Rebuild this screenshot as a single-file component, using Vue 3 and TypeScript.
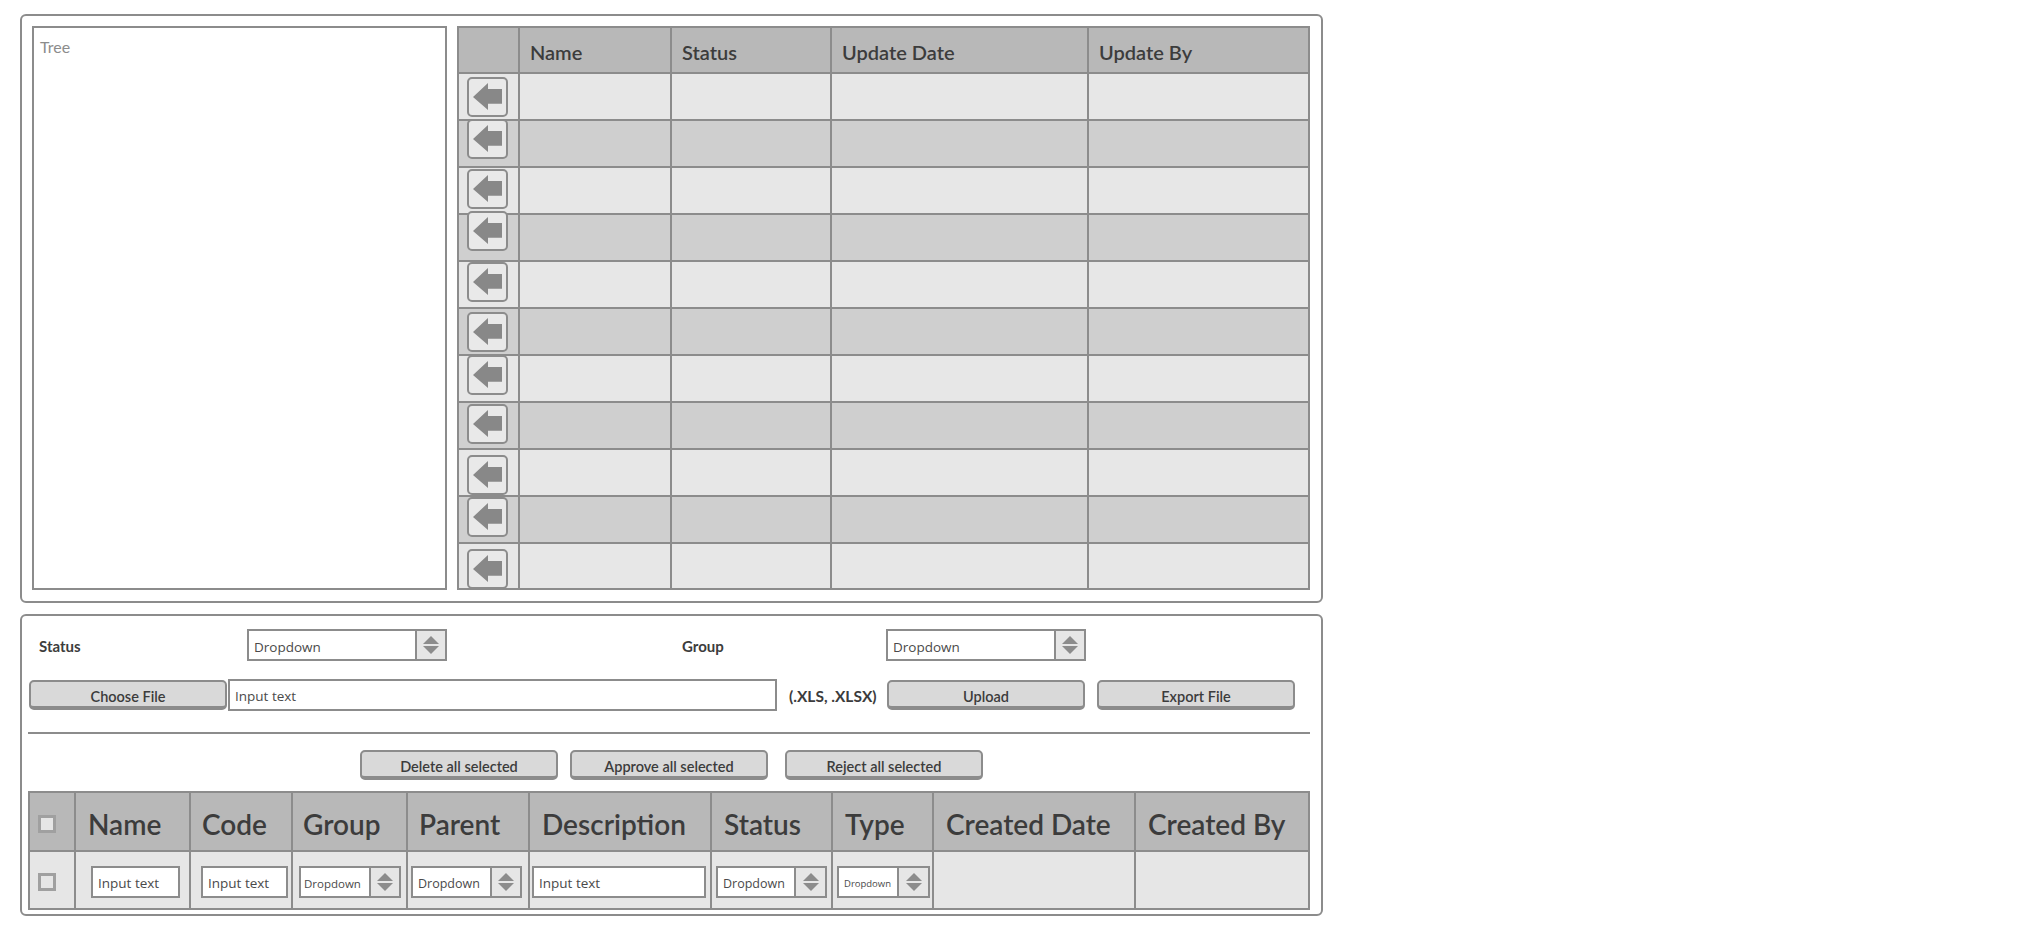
<script setup lang="ts">
type Cell = {
  kind: 'check' | 'input' | 'dropdown' | 'empty'
  left?: number
  width?: number
  font?: number
  pad?: number
  arrowWidth?: number
}

const treeColumns = ['', 'Name', 'Status', 'Update Date', 'Update By']

// the arrow buttons do not sit evenly in their rows
const rowOffsets = [3, -2, 1, -4, 0, 3, -1, 1, 5, 0, 5]

const listColumns = [
  '',
  'Name',
  'Code',
  'Group',
  'Parent',
  'Description',
  'Status',
  'Type',
  'Created Date',
  'Created By',
]

const listCells: Cell[] = [
  { kind: 'check' },
  { kind: 'input', left: 15, width: 89 },
  { kind: 'input', left: 10, width: 87 },
  { kind: 'dropdown', left: 6, width: 102, font: 11.5, pad: 3, arrowWidth: 30 },
  { kind: 'dropdown', left: 3, width: 111, font: 12.5, pad: 5, arrowWidth: 30 },
  { kind: 'input', left: 2, width: 174 },
  { kind: 'dropdown', left: 4, width: 111, font: 12.5, pad: 5, arrowWidth: 31 },
  { kind: 'dropdown', left: 4, width: 93, font: 9.5, pad: 5, arrowWidth: 31 },
  { kind: 'empty' },
  { kind: 'empty' },
]
</script>

<template>
  <div class="page">
    <section class="panel top-panel">
      <div class="tree">Tree</div>
      <div class="tree-table">
        <div v-for="(col, i) in treeColumns" :key="i" class="head-cell">{{ col }}</div>
        <template v-for="(offset, r) in rowOffsets" :key="r">
          <div class="row-cell" :class="{ alt: r % 2 === 1 }">
            <button class="arrow-btn" :style="{ marginTop: offset + 'px' }">
              <svg width="37" height="36" viewBox="0 0 37 36">
                <path d="M4 18 L19 4 L19 10 L33 10 L33 24.7 L19 24.7 L19 31 Z" fill="#888" />
              </svg>
            </button>
          </div>
          <div v-for="c in 4" :key="c" class="row-cell" :class="{ alt: r % 2 === 1 }"></div>
        </template>
      </div>
    </section>

    <section class="panel bottom-panel">
      <div class="filters">
        <span class="label status-label">Status</span>
        <div class="dropdown filter-drop">
          <span class="drop-text">Dropdown</span>
          <span class="drop-arrows"><i class="up"></i><i class="down"></i></span>
        </div>
        <span class="label group-label">Group</span>
        <div class="dropdown filter-drop">
          <span class="drop-text">Dropdown</span>
          <span class="drop-arrows"><i class="up"></i><i class="down"></i></span>
        </div>
      </div>

      <div class="file-row">
        <button class="btn choose">Choose File</button>
        <div class="input file-input">Input text</div>
        <span class="label ext">(.XLS, .XLSX)</span>
        <button class="btn upload">Upload</button>
        <button class="btn export">Export File</button>
      </div>

      <div class="divider"></div>

      <div class="bulk-row">
        <button class="btn">Delete all selected</button>
        <button class="btn">Approve all selected</button>
        <button class="btn reject">Reject all selected</button>
      </div>

      <div class="list-table">
        <div v-for="(col, i) in listColumns" :key="i" class="list-head">
          <span v-if="i === 0" class="check"></span>
          {{ col }}
        </div>
        <div v-for="(cell, i) in listCells" :key="'c' + i" class="list-cell">
          <span v-if="cell.kind === 'check'" class="check"></span>
          <div
            v-else-if="cell.kind === 'input'"
            class="input cell-input"
            :style="{ marginLeft: cell.left + 'px', width: cell.width + 'px' }"
          >
            Input text
          </div>
          <div
            v-else-if="cell.kind === 'dropdown'"
            class="dropdown cell-drop"
            :style="{ marginLeft: cell.left + 'px', width: cell.width + 'px' }"
          >
            <span
              class="drop-text"
              :style="{ fontSize: cell.font + 'px', paddingLeft: cell.pad + 'px' }"
            >Dropdown</span>
            <span class="drop-arrows" :style="{ width: cell.arrowWidth + 'px' }">
              <i class="up"></i><i class="down"></i>
            </span>
          </div>
        </div>
      </div>
    </section>
  </div>
</template>

<style>
html,
body {
  background: #fff;
}
</style>

<style scoped>
.page {
  width: 1303px;
  padding: 14px 0 0 20px;
  font-family: "Open Sans", sans-serif;
  color: #3c3c3c;
}

.panel {
  box-sizing: border-box;
  border: 2px solid #8c8c8c;
  border-radius: 6px;
  background: #fff;
}

.top-panel {
  height: 589px;
  display: flex;
  gap: 10px;
  padding: 10px 0 0 10px;
}

.tree {
  box-sizing: border-box;
  width: 415px;
  height: 564px;
  border: 2px solid #8c8c8c;
  padding: 9px 6px;
  font-family: Lato, sans-serif;
  font-size: 16px;
  color: #8c8c8c;
}

.tree-table {
  box-sizing: border-box;
  width: 853px;
  height: 564px;
  border-top: 2px solid #8c8c8c;
  border-left: 2px solid #8c8c8c;
  border-right: 2px solid #8c8c8c;
  display: grid;
  grid-template-columns: 61px 152px 160px 257px 219px;
  grid-template-rows: 46px repeat(10, 47px) 46px;
}

.head-cell {
  box-sizing: border-box;
  background: #b8b8b8;
  border-right: 2px solid #8c8c8c;
  border-bottom: 2px solid #8c8c8c;
  padding: 11px 0 0 10px;
  font-family: Lato, sans-serif;
  font-weight: 600;
  font-size: 20px;
  line-height: 26px;
  color: #3c3c3c;
}

.head-cell:nth-child(5),
.row-cell:nth-child(5n) {
  border-right: none;
}

.row-cell {
  box-sizing: border-box;
  background: #e7e7e7;
  border-right: 2px solid #8c8c8c;
  border-bottom: 2px solid #8c8c8c;
}

.row-cell.alt {
  background: #cfcfcf;
}

.arrow-btn {
  display: block;
  box-sizing: border-box;
  width: 41px;
  height: 40px;
  margin-left: 8px;
  padding: 0;
  border: 2px solid #8c8c8c;
  border-radius: 5px;
  background: #e9e9e9;
}

.arrow-btn svg {
  display: block;
}

.bottom-panel {
  height: 302px;
  margin-top: 11px;
  padding-top: 13px;
}

.filters {
  height: 32px;
  display: flex;
  align-items: center;
}

.label {
  padding-top: 2px;
  font-family: Lato, sans-serif;
  font-weight: 700;
  font-size: 15px;
  color: #3c3c3c;
}

.status-label {
  width: 208px;
  margin-left: 17px;
}

.group-label {
  width: 204px;
  margin-left: 235px;
}

.dropdown {
  box-sizing: border-box;
  height: 32px;
  display: flex;
  border: 2px solid #8c8c8c;
  background: #fff;
}

.filter-drop {
  width: 200px;
}

.drop-text {
  flex: 1;
  min-width: 0;
  padding-left: 5px;
  font-size: 13.5px;
  line-height: 31px;
  color: #4a4a4a;
}

.filter-drop .drop-text {
  line-height: 33px;
}

.drop-arrows {
  box-sizing: border-box;
  width: 30px;
  display: flex;
  flex-direction: column;
  align-items: center;
  justify-content: center;
  gap: 2px;
  background: #e6e6e6;
  border-left: 2px solid #8c8c8c;
}

.up,
.down {
  width: 0;
  height: 0;
  border-left: 8px solid transparent;
  border-right: 8px solid transparent;
}

.up {
  border-bottom: 8px solid #8c8c8c;
}

.down {
  border-top: 8px solid #8c8c8c;
}

.file-row {
  height: 32px;
  margin-top: 18px;
  padding-left: 7px;
  display: flex;
  align-items: center;
}

.btn {
  box-sizing: border-box;
  width: 198px;
  height: 30px;
  padding: 4px 0 0;
  border: 2px solid #8c8c8c;
  border-bottom-width: 4px;
  border-radius: 5px;
  background: #d9d9d9;
  font-family: Lato, sans-serif;
  font-weight: 600;
  font-size: 14.5px;
  color: #3c3c3c;
}

.input {
  box-sizing: border-box;
  height: 32px;
  border: 2px solid #8c8c8c;
  background: #fff;
  padding-left: 5px;
  font-size: 13.5px;
  line-height: 31px;
  color: #4a4a4a;
}

.file-input {
  width: 549px;
  margin-left: 1px;
}

.ext {
  width: 98px;
  margin-left: 12px;
  font-size: 15.5px;
  white-space: nowrap;
}

.export {
  margin-left: 12px;
}

.divider {
  height: 2px;
  margin: 21px 11px 0 6px;
  background: #8c8c8c;
}

.bulk-row {
  margin-top: 16px;
  padding-left: 338px;
  display: flex;
  gap: 12px;
}

.reject {
  margin-left: 5px;
}

.list-table {
  box-sizing: border-box;
  width: 1282px;
  margin: 11px 0 0 6px;
  border-top: 2px solid #8c8c8c;
  border-left: 2px solid #8c8c8c;
  border-right: 2px solid #8c8c8c;
  display: grid;
  grid-template-columns: 46px 115px 102px 115px 122px 182px 121px 101px 202px 172px;
  grid-template-rows: 59px 58px;
}

.list-head {
  box-sizing: border-box;
  display: flex;
  align-items: center;
  background: #b8b8b8;
  border-right: 2px solid #8c8c8c;
  border-bottom: 2px solid #8c8c8c;
  padding: 5px 0 0 12px;
  font-family: Lato, sans-serif;
  font-weight: 600;
  font-size: 28px;
  color: #3c3c3c;
}

.list-head:first-child {
  padding-left: 8px;
}

.list-head:nth-child(3),
.list-head:nth-child(5) {
  padding-left: 11px;
}

.list-head:nth-child(4) {
  padding-left: 10px;
}

.list-cell {
  box-sizing: border-box;
  display: flex;
  align-items: center;
  padding-top: 4px;
  background: #e6e6e6;
  border-right: 2px solid #8c8c8c;
  border-bottom: 2px solid #8c8c8c;
}

.list-head:nth-child(10),
.list-cell:nth-child(20) {
  border-right: none;
}

.list-cell .check {
  margin-left: 8px;
}

.check {
  box-sizing: border-box;
  width: 18px;
  height: 18px;
  border: 3px solid #a0a0a0;
  background: #e6e6e6;
}

.cell-input,
.cell-drop {
  flex: none;
}
</style>
